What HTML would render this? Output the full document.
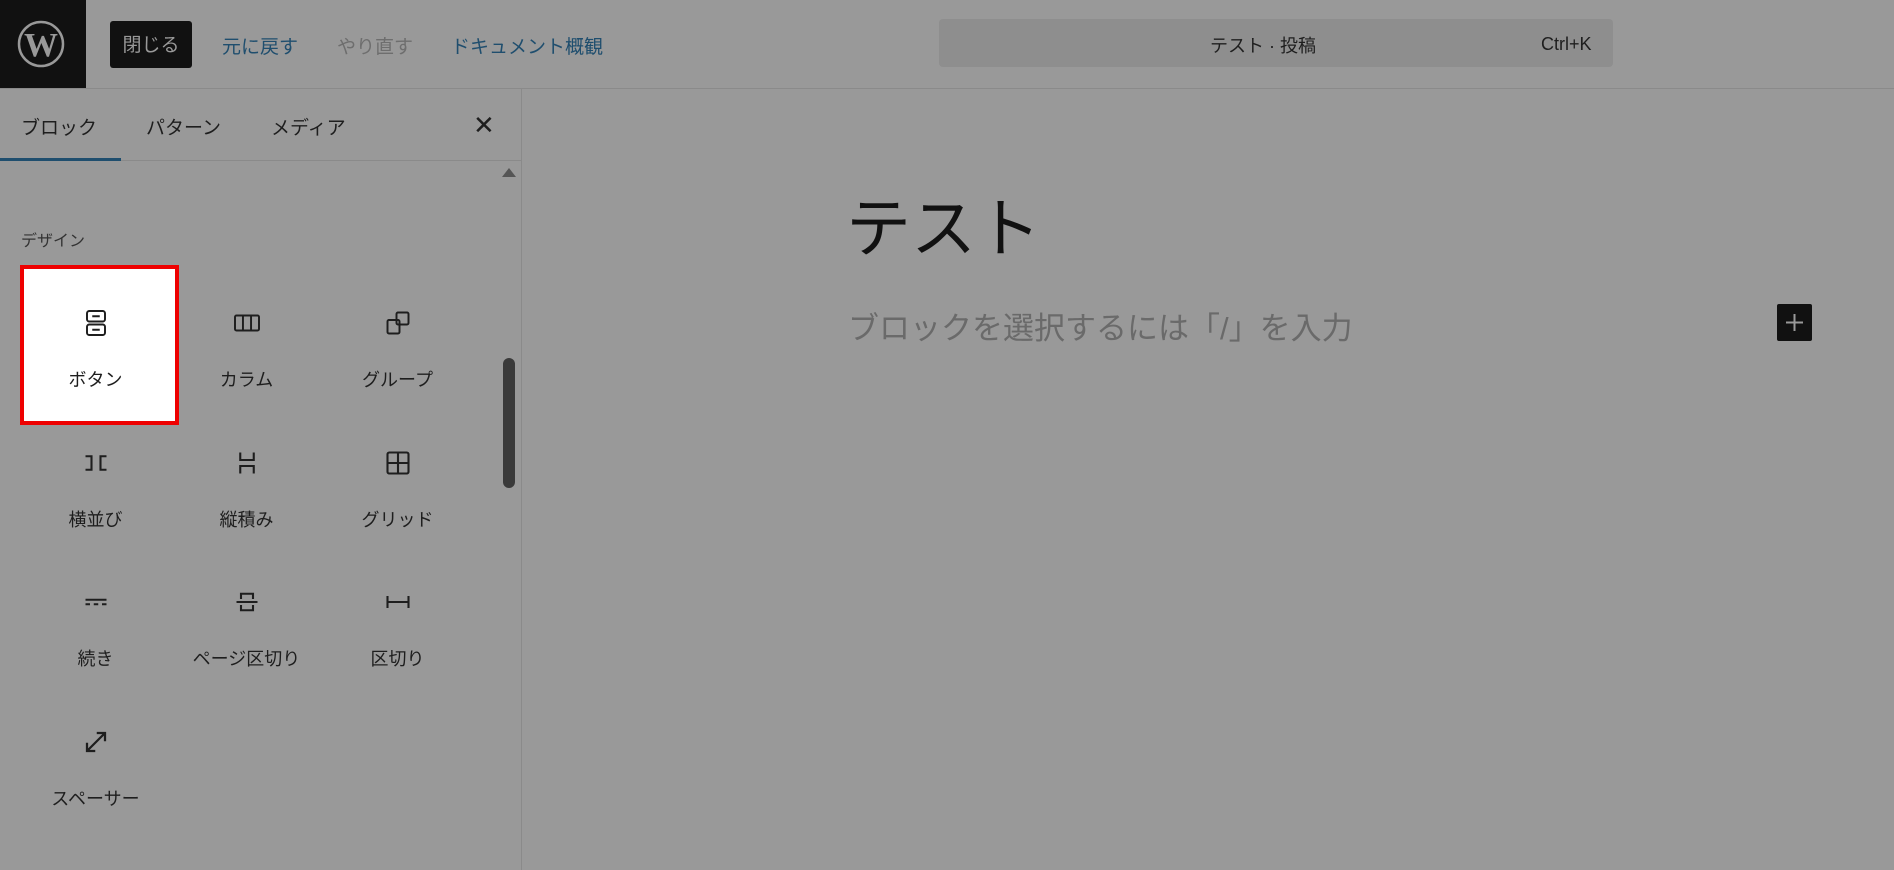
<!DOCTYPE html>
<html><head><meta charset="utf-8"><style>
*{margin:0;padding:0;box-sizing:border-box}
body{width:1894px;height:870px;background:#999;font-family:"Liberation Sans","Noto Sans CJK JP",sans-serif;color:#1e1e1e;position:relative;overflow:hidden}
.a{position:absolute;white-space:nowrap}
.hdr{position:absolute;left:0;top:0;width:1894px;height:89px;border-bottom:1px solid #8a8a8a}
.logo{left:0;top:0;width:86px;height:88px;background:#111}
.btn{left:110px;top:21px;width:82px;height:47px;background:#111;border-radius:3px;color:#999;font-size:19px;line-height:50px;text-align:center}
.lnk{top:32px;font-size:19px;color:#1f4e6e}
.search{left:939px;top:19px;width:674px;height:48px;background:#8e8e8e;border-radius:4px}
.side{left:521px;top:89px;width:1px;height:781px;background:#8a8a8a}
.tab{top:113px;font-size:19px}
.cell{position:absolute;width:151px;height:140px;text-align:center}
.cell svg{position:absolute;left:58px;top:27px}
.cell span{position:absolute;left:0;right:0;top:88px;font-size:18px}
</style></head><body>
<div class="hdr"></div>
<div class="a logo"><svg width="86" height="88" viewBox="0 0 86 88"><circle cx="41" cy="44" r="22" fill="none" stroke="#999" stroke-width="2.5"/><text x="41" y="56" text-anchor="middle" font-family="Liberation Serif" font-size="34" font-weight="bold" fill="#999">W</text></svg></div>
<div class="a btn">閉じる</div>
<div class="a lnk" style="left:222px">元に戻す</div>
<div class="a lnk" style="left:337px;color:#6e6e6e">やり直す</div>
<div class="a lnk" style="left:451px">ドキュメント概観</div>
<div class="a search"></div>
<div class="a" style="left:1210px;top:32px;font-size:18px">テスト · 投稿</div>
<div class="a" style="left:1541px;top:34px;font-size:18px">Ctrl+K</div>
<div class="a side"></div>
<div class="a tab" style="left:21px">ブロック</div>
<div class="a tab" style="left:146px">パターン</div>
<div class="a tab" style="left:271px">メディア</div>
<div class="a" style="left:473px;top:110px;font-size:26px">✕</div>
<div class="a" style="left:0;top:160px;width:521px;height:1px;background:#8a8a8a"></div>
<div class="a" style="left:0;top:158px;width:121px;height:3px;background:#1f4e6e"></div>
<div class="a" style="left:502px;top:168px;width:0;height:0;border-left:7px solid transparent;border-right:7px solid transparent;border-bottom:9px solid #555"></div>
<div class="a" style="left:503px;top:358px;width:12px;height:130px;background:#3a3a3a;border-radius:6px"></div>
<div class="a" style="left:21px;top:227px;font-size:16px;color:#333">デザイン</div>
<div class="a" style="left:20px;top:265px;width:159px;height:160px;border:4px solid #e00;background:#fff"></div>
<div class="cell" style="left:20px;top:278px"><svg width="36" height="36" viewBox="0 0 24 24" fill="none" stroke="#1e1e1e" stroke-width="1.3"><rect x="6" y="4" width="12" height="7" rx="1.5"/><rect x="6" y="13" width="12" height="7" rx="1.5"/><path d="M9.5 7.5h5M9.5 16.5h5"/></svg><span>ボタン</span></div>
<div class="cell" style="left:171px;top:278px"><svg width="36" height="36" viewBox="0 0 24 24" fill="none" stroke="#1e1e1e" stroke-width="1.3"><rect x="4" y="7" width="16" height="10" rx="1"/><path d="M9.3 7v10M14.7 7v10"/></svg><span>カラム</span></div>
<div class="cell" style="left:322px;top:278px"><svg width="36" height="36" viewBox="0 0 24 24" fill="none" stroke="#1e1e1e" stroke-width="1.3"><rect x="5" y="10" width="8" height="9" rx="1"/><rect x="11" y="5" width="8" height="8" rx="1"/></svg><span>グループ</span></div>
<div class="cell" style="left:20px;top:418px"><svg width="36" height="36" viewBox="0 0 24 24" fill="none" stroke="#1e1e1e" stroke-width="1.4"><path d="M5 7.5h4v9H5M19 7.5h-4v9h4"/></svg><span>横並び</span></div>
<div class="cell" style="left:171px;top:418px"><svg width="36" height="36" viewBox="0 0 24 24" fill="none" stroke="#1e1e1e" stroke-width="1.4"><path d="M7.5 5v5h9V5M7.5 19v-5h9v5"/></svg><span>縦積み</span></div>
<div class="cell" style="left:322px;top:418px"><svg width="36" height="36" viewBox="0 0 24 24" fill="none" stroke="#1e1e1e" stroke-width="1.4"><rect x="5" y="5" width="14" height="14" rx="1.2"/><path d="M12 5v14M5 12h14"/></svg><span>グリッド</span></div>
<div class="cell" style="left:20px;top:557px"><svg width="36" height="36" viewBox="0 0 24 24" fill="none" stroke="#1e1e1e" stroke-width="1.4"><path d="M5 10.5h14M5 13.5h3M10.5 13.5h3M16 13.5h3"/></svg><span>続き</span></div>
<div class="cell" style="left:171px;top:557px"><svg width="36" height="36" viewBox="0 0 24 24" fill="none" stroke="#1e1e1e" stroke-width="1.4"><path d="M8 10V6.5h8V10M8 14v3.5h8V14M5 12h14"/></svg><span>ページ区切り</span></div>
<div class="cell" style="left:322px;top:557px"><svg width="36" height="36" viewBox="0 0 24 24" fill="none" stroke="#1e1e1e" stroke-width="1.4"><path d="M5 8v8M19 8v8M5 12h14"/></svg><span>区切り</span></div>
<div class="cell" style="left:20px;top:697px"><svg width="36" height="36" viewBox="0 0 24 24" fill="none" stroke="#1e1e1e" stroke-width="1.5"><path d="M6 18L18 6M12.5 6H18v5.5M6 12.5V18h5.5"/></svg><span>スペーサー</span></div>
<div class="a" style="left:846px;top:196px;font-size:65px;line-height:1;color:#111">テスト</div>
<div class="a" style="left:848px;top:303px;font-size:31px;color:#6a6a6a">ブロックを選択するには「/」を入力</div>
<div class="a" style="left:1777px;top:304px;width:35px;height:37px;background:#111;border-radius:2px"><svg width="35" height="37" viewBox="0 0 35 37"><path d="M17.5 10v17M9 18.5h17" stroke="#999" stroke-width="2"/></svg></div>
</body></html>
